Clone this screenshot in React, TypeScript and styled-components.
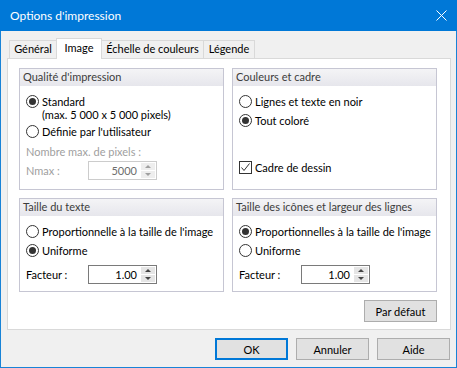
import styled, { createGlobalStyle } from 'styled-components';

const Global = createGlobalStyle`
  html, body { margin: 0; padding: 0; background: #ffffff; }
  body {
    font-family: "Segoe UI", Lato, "Liberation Sans", sans-serif;
    font-size: 11px;
    color: #000;
  }
  * { box-sizing: border-box; }
`;

const Window = styled.div`
  width: 457px;
  height: 368px;
  border: 1px solid #1883d7;
  border-top: none;
  background: #f0f0f0;
  display: flex;
  flex-direction: column;
`;

const TitleBar = styled.div`
  height: 31px;
  margin: 0 -1px;
  padding: 0 10px 0 10px;
  background: #0078d7;
  color: #fff;
  font-size: 12px;
  display: flex;
  align-items: center;
  justify-content: space-between;
`;

const Body = styled.div`
  flex: 1;
  padding: 7px 5px 0 6px;
  display: flex;
  flex-direction: column;
`;

const TabStrip = styled.div`
  display: flex;
  align-items: flex-end;
  height: 20px;
  padding-left: 2px;
  position: relative;
  z-index: 1;
`;

const Tab = styled.div<{ $active?: boolean; $w: number }>`
  width: ${p => p.$w}px;
  height: ${p => (p.$active ? '21px' : '18px')};
  margin-bottom: ${p => (p.$active ? '-1px' : '0')};
  padding-top: ${p => (p.$active ? '1px' : '0')};
  border: 1px solid #d9d9d9;
  border-bottom: none;
  margin-left: -1px;
  background: ${p => (p.$active ? '#ffffff' : '#f0f0f0')};
  line-height: 16px;
  text-align: center;
  white-space: nowrap;
  &:first-child { margin-left: 0; }
`;

const Panel = styled.div`
  height: 272px;
  background: #fff;
  border: 1px solid #d9d9d9;
  padding: 9px 12px 7px 11px;
  display: flex;
  flex-direction: column;
`;

const Groups = styled.div`
  display: grid;
  grid-template-columns: 205px 205px;
  grid-template-rows: 122px 94px;
  gap: 8px;
`;

const Group = styled.div`
  border: 1px solid #c6c6d3;
  display: flex;
  flex-direction: column;
`;

const GroupHead = styled.div`
  height: 17px;
  padding-left: 3px;
  line-height: 16px;
  color: #3c3c3c;
  background: linear-gradient(#f4f4f6, #e6e6ec);
  white-space: nowrap;
`;

const GroupBody = styled.div`
  padding: 0 6px;
  display: flex;
  flex-direction: column;
`;

const Option = styled.div<{ $mt?: number; $multi?: boolean }>`
  display: flex;
  align-items: ${p => (p.$multi ? 'flex-start' : 'center')};
  gap: 3px;
  height: ${p => (p.$multi ? '27px' : '19px')};
  line-height: ${p => (p.$multi ? '13px' : '19px')};
  margin-top: ${p => p.$mt ?? 0}px;
  white-space: nowrap;
`;

const RadioDot = styled.span<{ $on?: boolean }>`
  flex: none;
  width: 13px;
  height: 13px;
  border: 1px solid #333;
  border-radius: 50%;
  background: #fff;
  display: grid;
  place-items: center;
  &::after {
    content: '';
    width: 7px;
    height: 7px;
    border-radius: 50%;
    background: ${p => (p.$on ? '#333' : 'transparent')};
  }
`;

const CheckBox = styled.span`
  flex: none;
  width: 13px;
  height: 13px;
  border: 1px solid #333;
  background: #fff;
  display: grid;
  place-items: center;
`;

const Field = styled.div<{ $mt?: number }>`
  display: flex;
  align-items: center;
  height: 19px;
  margin-top: ${p => p.$mt ?? 0}px;
`;

const Label = styled.span<{ $disabled?: boolean; $w?: number }>`
  color: ${p => (p.$disabled ? '#a0a0a0' : '#000')};
  width: ${p => (p.$w ? `${p.$w}px` : 'auto')};
  white-space: nowrap;
  line-height: 19px;
`;

const Spin = styled.div<{ $disabled?: boolean }>`
  width: 69px;
  height: 19px;
  border: 1px solid ${p => (p.$disabled ? '#cccccc' : '#7a7a7a')};
  background: #fff;
  display: flex;
`;

const SpinValue = styled.span<{ $disabled?: boolean }>`
  flex: 1;
  text-align: right;
  padding-right: 4px;
  line-height: 17px;
  color: ${p => (p.$disabled ? '#6d6d6d' : '#000')};
`;

const SpinButtons = styled.div`
  width: 15px;
  padding: 1px 1px 1px 0;
  display: flex;
  flex-direction: column;
  gap: 1px;
`;

const SpinButton = styled.div<{ $down?: boolean; $disabled?: boolean }>`
  flex: 1;
  background: ${p => (p.$disabled ? '#eeeeee' : '#e5e5e5')};
  display: grid;
  place-items: center;
  &::after {
    content: '';
    border-left: 3px solid transparent;
    border-right: 3px solid transparent;
    ${p => (p.$down ? 'border-top' : 'border-bottom')}: 3px solid ${p => (p.$disabled ? '#a0a0a0' : '#444')};
  }
`;

const PanelFooter = styled.div`
  display: flex;
  justify-content: flex-end;
  margin-top: 8px;
  padding-right: 1px;
`;

const Button = styled.button<{ $default?: boolean }>`
  width: 73px;
  height: 22px;
  padding: 0;
  font: inherit;
  color: #000;
  background: #e1e1e1;
  border: 1px solid ${p => (p.$default ? '#0078d7' : '#adadad')};
  box-shadow: ${p => (p.$default ? 'inset 0 0 0 1px #0078d7' : 'none')};
`;

const ButtonRow = styled.div`
  display: flex;
  justify-content: flex-end;
  gap: 8px;
  margin-top: 8px;
  padding-right: 1px;
`;

function Radio({ on, label, mt, multi }: { on?: boolean; label: React.ReactNode; mt?: number; multi?: boolean }) {
  return (
    <Option $mt={mt} $multi={multi}>
      <RadioDot $on={on} />
      <span>{label}</span>
    </Option>
  );
}

function SpinBox({ value, disabled }: { value: string; disabled?: boolean }) {
  return (
    <Spin $disabled={disabled}>
      <SpinValue $disabled={disabled}>{value}</SpinValue>
      <SpinButtons>
        <SpinButton $disabled={disabled} />
        <SpinButton $down $disabled={disabled} />
      </SpinButtons>
    </Spin>
  );
}

export default function App() {
  return (
    <>
      <Global />
      <Window>
        <TitleBar>
          <span>Options d'impression</span>
          <svg width="11" height="11" viewBox="0 0 11 11">
            <path d="M0.5 0.5 L10.5 10.5 M10.5 0.5 L0.5 10.5" stroke="#fff" strokeWidth="1" />
          </svg>
        </TitleBar>
        <Body>
          <TabStrip>
            <Tab $w={48}>Général</Tab>
            <Tab $active $w={46}>Image</Tab>
            <Tab $w={103}>Échelle de couleurs</Tab>
            <Tab $w={52}>Légende</Tab>
          </TabStrip>
          <Panel>
            <Groups>
              <Group>
                <GroupHead>Qualité d'impression</GroupHead>
                <GroupBody>
                  <Radio on multi mt={9} label={<>Standard<br />(max. 5 000 x 5 000 pixels)</>} />
                  <Radio label="Définie par l'utilisateur" />
                  <Field $mt={1}>
                    <Label $disabled>Nombre max. de pixels :</Label>
                  </Field>
                  <Field>
                    <Label $disabled $w={62}>Nmax :</Label>
                    <SpinBox value="5000" disabled />
                  </Field>
                </GroupBody>
              </Group>
              <Group>
                <GroupHead>Couleurs et cadre</GroupHead>
                <GroupBody>
                  <Radio mt={6} label="Lignes et texte en noir" />
                  <Radio on label="Tout coloré" />
                  <Option $mt={28}>
                    <CheckBox>
                      <svg width="11" height="11" viewBox="0 0 11 11">
                        <path d="M1.5 5.5 L4 8.5 L9.5 1.5" fill="none" stroke="#333" strokeWidth="1" />
                      </svg>
                    </CheckBox>
                    <span>Cadre de dessin</span>
                  </Option>
                </GroupBody>
              </Group>
              <Group>
                <GroupHead>Taille du texte</GroupHead>
                <GroupBody>
                  <Radio mt={6} label="Proportionnelle à la taille de l'image" />
                  <Radio on label="Uniforme" />
                  <Field $mt={5}>
                    <Label $w={62}>Facteur :</Label>
                    <SpinBox value="1.00" />
                  </Field>
                </GroupBody>
              </Group>
              <Group>
                <GroupHead>Taille des icônes et largeur des lignes</GroupHead>
                <GroupBody>
                  <Radio on mt={6} label="Proportionnelles à la taille de l'image" />
                  <Radio label="Uniforme" />
                  <Field $mt={5}>
                    <Label $w={62}>Facteur :</Label>
                    <SpinBox value="1.00" />
                  </Field>
                </GroupBody>
              </Group>
            </Groups>
            <PanelFooter>
              <Button>Par défaut</Button>
            </PanelFooter>
          </Panel>
          <ButtonRow>
            <Button $default>OK</Button>
            <Button>Annuler</Button>
            <Button>Aide</Button>
          </ButtonRow>
        </Body>
      </Window>
    </>
  );
}
